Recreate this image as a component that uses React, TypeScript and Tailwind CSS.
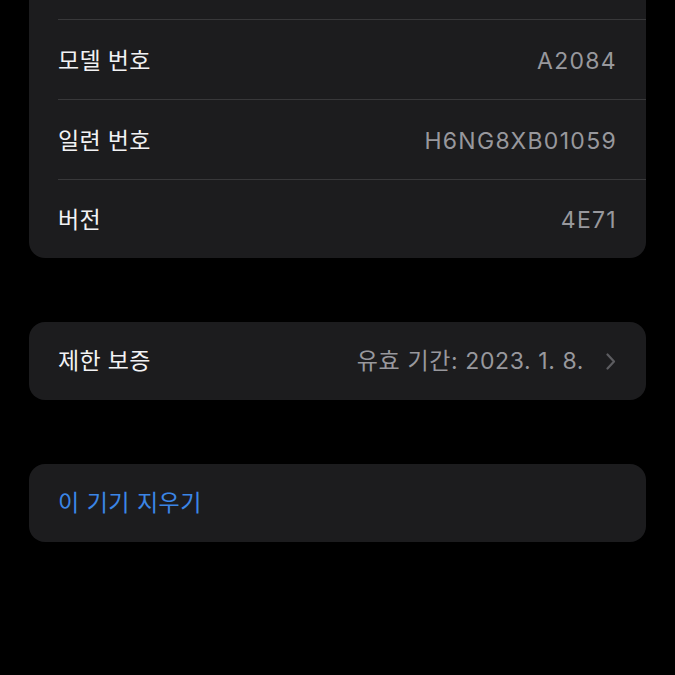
const FONT = "font-['Inter','Noto_Sans_CJK_KR',sans-serif]";

function Row({ label, value, last }: { label: string; value: string; last?: boolean }) {
  return (
    <div>
      <div className="ml-[29px] h-px bg-[#38383a]" />
      <div className={`flex items-center justify-between pl-[29px] pr-[29px] pt-[3px] ${last ? 'h-[78px]' : 'h-[79px]'}`}>
        <span className="text-[23px] tracking-[0.3px] text-[#f2f2f4]">{label}</span>
        <span className="text-[23px] tracking-[1.3px] text-[#98989d]">{value}</span>
      </div>
    </div>
  );
}

export default function App() {
  return (
    <div className={`min-h-[675px] w-[675px] bg-black px-[29px] ${FONT}`}>
      {/* device info card (top cut off) */}
      <div className="overflow-hidden rounded-b-[16px] bg-[#1c1c1e]">
        <div className="h-[19px]" />
        <Row label="모델 번호" value="A2084" />
        <Row label="일련 번호" value="H6NG8XB01059" />
        <Row label="버전" value="4E71" last />
      </div>

      {/* warranty */}
      <div className="mt-[64px] flex h-[78px] items-center justify-between rounded-[16px] bg-[#1c1c1e] pl-[29px] pr-[30px] pt-px">
        <span className="text-[23px] tracking-[0.3px] text-[#f2f2f4]">제한 보증</span>
        <div className="flex items-center gap-[22px]">
          <span className="text-[23px] tracking-[0.6px] text-[#98989d]">유효 기간: 2023. 1. 8.</span>
          <svg width="10" height="17" viewBox="0 0 10 17" fill="none">
            <path d="M1.5 1.5 L8 8.5 L1.5 15.5" stroke="#5c5c60" strokeWidth="2.2" strokeLinecap="round" strokeLinejoin="round" />
          </svg>
        </div>
      </div>

      {/* erase */}
      <div className="mt-[64px] flex h-[78px] items-center rounded-[16px] bg-[#1c1c1e] pl-[29px] pt-px">
        <span className="text-[23px] tracking-[0.5px] text-[#3b86e6]">이 기기 지우기</span>
      </div>
    </div>
  );
}
